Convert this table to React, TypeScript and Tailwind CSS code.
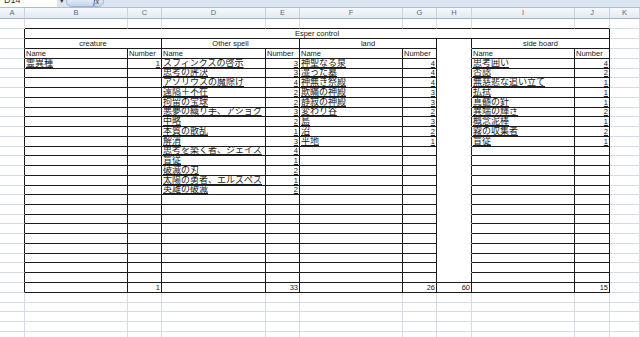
import React from "react";
import clsx from "clsx";

const COLS =
  "grid grid-cols-[25px_103px_34px_104px_34px_103px_34px_35px_103px_35px_30px]";

type Entry = [string, number];

const creature: Entry[] = [["霊異種", 1]];

const spells: Entry[] = [
  ["スフィンクスの啓示", 3],
  ["思考の評決", 3],
  ["アゾリウスの魔除け", 4],
  ["遠隔＋不在", 2],
  ["拘留の宝球", 2],
  ["悪夢の織り手、アショク", 3],
  ["中略", 2],
  ["本質の散乱", 1],
  ["解消", 3],
  ["思考を築く者、ジェイス", 4],
  ["盲従", 1],
  ["破滅の刃", 2],
  ["太陽の勇者、エルズペス", 1],
  ["英雄の破滅", 2],
];

const lands: Entry[] = [
  ["神聖なる泉", 4],
  ["湿った墓", 4],
  ["神無き祭殿", 4],
  ["欺瞞の神殿", 3],
  ["静寂の神殿", 3],
  ["変わり谷", 2],
  ["島", 3],
  ["沼", 2],
  ["平地", 1],
];

const side: Entry[] = [
  ["思考囲い", 4],
  ["否認", 2],
  ["無慈悲な追い立て", 1],
  ["払拭", 1],
  ["真髄の針", 1],
  ["異端の輝き", 2],
  ["概念泥棒", 1],
  ["霧の収集者", 2],
  ["盲従", 1],
];

const DATA_ROWS = 23;
const sum = (list: Entry[]) => list.reduce((n, e) => n + e[1], 0);

interface CellProps {
  span?: 1 | 2 | 9;
  dr?: boolean;
  db?: boolean;
  nb?: boolean;
  align?: "left" | "right" | "center";
  u?: boolean;
  jp?: boolean;
  children?: React.ReactNode;
}

const Cell: React.FC<CellProps> = ({
  span = 1,
  dr,
  db,
  nb,
  align = "left",
  u,
  jp,
  children,
}) => (
  <div
    className={clsx(
      "flex items-end overflow-hidden whitespace-nowrap border-r border-b px-px",
      span === 2 && "col-span-2",
      span === 9 && "col-span-9",
      dr ? "border-r-[#1c1c1c]" : "border-r-[#d6dce6]",
      nb ? "border-b-white" : db ? "border-b-[#1c1c1c]" : "border-b-[#d6dce6]",
      align === "right" && "justify-end",
      align === "center" && "justify-center"
    )}
  >
    {children !== undefined && (
      <span
        className={clsx(
          jp ? "text-[9px] leading-[9px]" : "text-[7.5px] leading-[8px]",
          u && "underline decoration-[#222] underline-offset-[1px]"
        )}
      >
        {children}
      </span>
    )}
  </div>
);

const Blank = () => <Cell />;

const DataPair = ({ entry }: { entry?: Entry }) => (
  <>
    <Cell dr db u jp>
      {entry?.[0]}
    </Cell>
    <Cell dr db u align="right">
      {entry?.[1]}
    </Cell>
  </>
);

export default function App() {
  const letters = ["A", "B", "C", "D", "E", "F", "G", "H", "I", "J", "K"];

  return (
    <div className="h-[337px] w-[640px] overflow-hidden bg-white font-['Liberation_Sans','Noto_Sans_CJK_JP',sans-serif] text-[#1a1a1a]">
      {/* formula bar, mostly scrolled off */}
      <div className="flex h-[8px] items-start overflow-hidden border-b border-[#a9bdd5] bg-[#dbe5f1]">
        <div className="h-full w-[57px] overflow-hidden bg-white pl-[4px]">
          <div className="-mt-[5px] text-[9px] leading-[10px] text-[#333]">D14</div>
        </div>
        <div className="-mt-[4px] w-[9px] text-center text-[7px] text-[#333]">▾</div>
        <div className="-mt-[4px] flex h-[11px] w-[38px] items-center justify-end rounded-full border border-[#9fb6d3] bg-linear-to-b from-[#eef3fa] to-[#c4d5ec] pr-[4px]">
          <span className="font-['Liberation_Serif',serif] text-[8px] italic text-[#333]">fx</span>
        </div>
      </div>

      {/* column letters */}
      <div className={clsx(COLS, "h-[11px] border-b border-[#9eb3cc] bg-linear-to-b from-[#f7f9fc] to-[#e3e9f2]")}>
        {letters.map((l) => (
          <div
            key={l}
            className="flex items-center justify-center border-r border-[#c7d3e2] text-[7.5px] leading-none text-[#5d6c84]"
          >
            {l}
          </div>
        ))}
      </div>

      {/* row 1 */}
      <div className={clsx(COLS, "h-[10px]")}>
        <Blank />
        {Array.from({ length: 9 }).map((_, i) => (
          <Cell key={i} db />
        ))}
        <Blank />
      </div>

      {/* title */}
      <div className={clsx(COLS, "h-[10px]")}>
        <Cell dr />
        <Cell span={9} dr db align="center">
          Esper control
        </Cell>
        <Blank />
      </div>

      {/* sections */}
      <div className={clsx(COLS, "h-[10px]")}>
        <Cell dr />
        <Cell span={2} dr db align="center">
          creature
        </Cell>
        <Cell span={2} dr db align="center">
          Other spell
        </Cell>
        <Cell span={2} dr db align="center">
          land
        </Cell>
        <Cell dr nb />
        <Cell span={2} dr db align="center">
          side board
        </Cell>
        <Blank />
      </div>

      {/* headers */}
      <div className={clsx(COLS, "h-[10px]")}>
        <Cell dr />
        {["Name", "Number", "Name", "Number", "Name", "Number"].map((t, i) => (
          <Cell key={i} dr db>
            {t}
          </Cell>
        ))}
        <Cell dr nb />
        <Cell dr db>
          Name
        </Cell>
        <Cell dr db>
          Number
        </Cell>
        <Blank />
      </div>

      {/* card rows */}
      {Array.from({ length: DATA_ROWS }).map((_, i) => (
        <div key={i} className={clsx(COLS, "h-[9.74px]")}>
          <Cell dr />
          <DataPair entry={creature[i]} />
          <DataPair entry={spells[i]} />
          <DataPair entry={lands[i]} />
          {i === DATA_ROWS - 1 ? <Cell dr db /> : <Cell dr nb />}
          <DataPair entry={side[i]} />
          <Blank />
        </div>
      ))}

      {/* totals */}
      <div className={clsx(COLS, "h-[10px]")}>
        <Cell dr />
        <Cell dr db />
        <Cell dr db align="right">
          {sum(creature)}
        </Cell>
        <Cell dr db />
        <Cell dr db align="right">
          {sum(spells)}
        </Cell>
        <Cell dr db />
        <Cell dr db align="right">
          {sum(lands)}
        </Cell>
        <Cell dr db align="right">
          {sum(creature) + sum(spells) + sum(lands)}
        </Cell>
        <Cell dr db />
        <Cell dr db align="right">
          {sum(side)}
        </Cell>
        <Blank />
      </div>

      {/* empty sheet below */}
      {Array.from({ length: 5 }).map((_, r) => (
        <div key={r} className={clsx(COLS, "h-[9.74px]")}>
          {letters.map((l) => (
            <Blank key={l} />
          ))}
        </div>
      ))}
    </div>
  );
}
